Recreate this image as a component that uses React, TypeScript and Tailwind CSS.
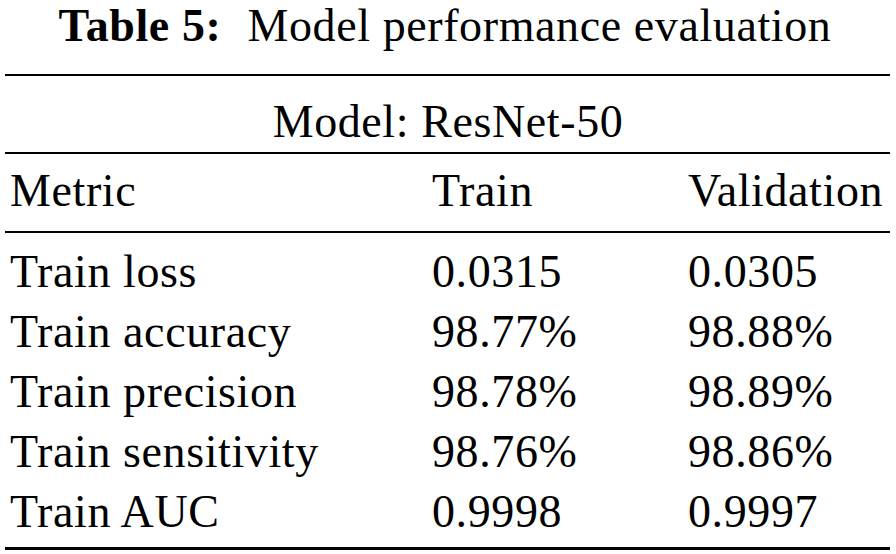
import React from "react";

const rows = [
    { metric: "Train loss", train: "0.0315", validation: "0.0305" },
    { metric: "Train accuracy", train: "98.77%", validation: "98.88%" },
    { metric: "Train precision", train: "98.78%", validation: "98.89%" },
    { metric: "Train sensitivity", train: "98.76%", validation: "98.86%" },
    { metric: "Train AUC", train: "0.9998", validation: "0.9997" },
];

const Row = ({ cells }: { cells: string[] }) => (
    <div className="grid grid-cols-[422px_256px_1fr] pl-[10px] leading-[60px] h-[60px] whitespace-nowrap">
        {cells.map((c, i) => (
            <div key={i}>{c}</div>
        ))}
    </div>
);

const App = () => {
    return (
        <div className="w-[896px] h-[554px] bg-white text-black text-[46px] tracking-[0.6px] font-['Liberation_Serif','Times_New_Roman',serif] overflow-hidden">
            <div className="h-[51px] leading-[51px] text-center whitespace-nowrap pr-[6px]">
                <span className="font-bold">Table 5:</span>
                <span className="ml-[26px]">Model performance evaluation</span>
            </div>

            <div className="mt-[23px] ml-[5px] w-[885px] h-[2px] bg-black" />

            <div className="mt-[16px] h-[60px] leading-[60px] text-center">Model: ResNet-50</div>

            <div className="ml-[5px] w-[885px] h-[2px] bg-black" />

            <div className="mt-[7px]">
                <Row cells={["Metric", "Train", "Validation"]} />
            </div>

            <div className="mt-[10px] ml-[5px] w-[885px] h-[2px] bg-black" />

            <div className="mt-[9px]">
                {rows.map((r) => (
                    <Row key={r.metric} cells={[r.metric, r.train, r.validation]} />
                ))}
            </div>

            <div className="mt-[5px] ml-[5px] w-[885px] h-[3px] bg-black" />
        </div>
    );
};

export default App;
